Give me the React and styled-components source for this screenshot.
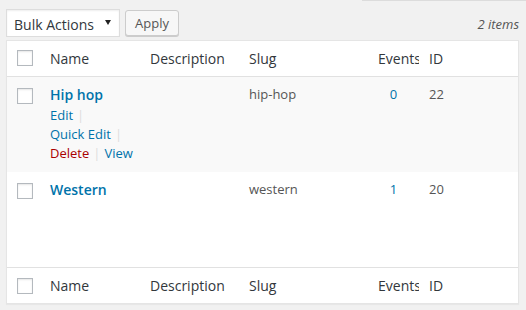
import React from "react";
import styled, { createGlobalStyle } from "styled-components";

const GlobalStyle = createGlobalStyle`
  html, body {
    margin: 0;
    padding: 0;
    background: #f1f1f1;
  }
  body {
    font-family: "Open Sans", "Liberation Sans", sans-serif;
    font-size: 13px;
    color: #444;
  }
`;

const Page = styled.div`
  width: 526px;
  height: 310px;
  overflow: hidden;
  padding: 0 7px 0 6px;
  box-sizing: border-box;
`;

const TopEdge = styled.div`
  display: flex;
  justify-content: flex-end;
  margin-right: -7px;
`;

const SearchEdge = styled.div`
  width: 164px;
  height: 1px;
  background: #dcdcdc;
`;

const TableNav = styled.div`
  display: flex;
  align-items: flex-start;
  gap: 5px;
  padding-top: 8px;
  height: 31px;
`;

const Select = styled.div`
  width: 114px;
  height: 28px;
  box-sizing: border-box;
  display: flex;
  align-items: center;
  justify-content: space-between;
  padding: 2px 8px 0 7px;
  background: #fff;
  border: 1px solid #ddd;
  box-shadow: inset 0 1px 2px rgba(0, 0, 0, 0.07);
  font-size: 14px;
  color: #32373c;
`;

const Caret = styled.svg`
  width: 6px;
  height: 5px;
  margin-top: -3px;
`;

const Button = styled.button`
  height: 26px;
  margin-top: 1px;
  padding: 0 9px 1px;
  font-family: "Open Sans", "Liberation Sans", sans-serif;
  font-size: 13px;
  line-height: 24px;
  color: #555;
  background: #f7f7f7;
  border: 1px solid #ccc;
  border-radius: 3px;
  box-shadow: 0 1px 0 #ccc;
`;

const Count = styled.div`
  margin-left: auto;
  padding-top: 6px;
  font-size: 13px;
  font-style: italic;
  color: #555;
`;

const Table = styled.table`
  width: 100%;
  table-layout: fixed;
  border-collapse: separate;
  border-spacing: 0;
  background: #fff;
  border: 1px solid #e5e5e5;
  box-shadow: 0 1px 1px rgba(0, 0, 0, 0.04);
`;

const HeadCell = styled.th`
  text-align: left;
  font-weight: 400;
  font-size: 14px;
  line-height: 19px;
  color: #32373c;
  padding: 8px 10px;
  overflow: hidden;
  white-space: nowrap;
  ${(p) => (p.$foot ? "border-top: 1px solid #e1e1e1;" : "border-bottom: 1px solid #e1e1e1;")}
`;

const CheckHead = styled.th`
  padding: ${(p) => (p.$foot ? "10px" : "9px")} 0 0 10px;
  vertical-align: top;
  ${(p) => (p.$foot ? "border-top: 1px solid #e1e1e1;" : "border-bottom: 1px solid #e1e1e1;")}
`;

const Row = styled.tr`
  background: ${(p) => (p.$alt ? "#f9f9f9" : "#fff")};
`;

const Cell = styled.td`
  vertical-align: top;
  padding: 8px 10px 9px;
  font-size: 13px;
  line-height: 19px;
  color: #555;
  overflow: hidden;
  ${(p) => (p.$center ? "text-align: center;" : "")}
`;

const CheckCell = styled.th`
  vertical-align: top;
  padding: 11px 0 0 10px;
`;

const Checkbox = styled.input.attrs({ type: "checkbox" })`
  appearance: none;
  display: block;
  margin: 0;
  width: 16px;
  height: 16px;
  background: #fff;
  border: 1px solid #b4b9be;
  box-shadow: inset 0 1px 2px rgba(0, 0, 0, 0.1);
  box-sizing: border-box;
`;

const RowTitle = styled.a`
  display: block;
  font-size: 14px;
  font-weight: 600;
  line-height: 20px;
  color: #0073aa;
  text-decoration: none;
`;

const Actions = styled.div`
  padding-top: 1px;
  visibility: ${(p) => (p.$hidden ? "hidden" : "visible")};
`;

const ActionLine = styled.div`
  line-height: 19px;
  white-space: nowrap;
`;

const ActionLink = styled.a`
  color: ${(p) => (p.$danger ? "#a00" : "#0073aa")};
  text-decoration: none;
`;

const Sep = styled.span`
  color: #ddd;
  margin: 0 4px;
`;

const CountLink = styled.a`
  color: #0073aa;
  text-decoration: none;
`;

const columns = [
  { key: "name", label: "Name", width: 100 },
  { key: "desc", label: "Description", width: 99 },
  { key: "slug", label: "Slug", width: 129 },
  { key: "events", label: "Events", width: 51 },
  { key: "id", label: "ID" },
];

const terms = [
  { name: "Hip hop", slug: "hip-hop", events: 0, id: 22 },
  { name: "Western", slug: "western", events: 1, id: 20 },
];

const HeaderRow = ({ foot }) => (
  <tr>
    <CheckHead $foot={foot}>
      <Checkbox />
    </CheckHead>
    {columns.map((c) => (
      <HeadCell key={c.key} $foot={foot}>
        {c.label}
      </HeadCell>
    ))}
  </tr>
);

const App = () => (
  <Page>
    <GlobalStyle />
    <TopEdge>
      <SearchEdge />
    </TopEdge>
    <TableNav>
      <Select>
        Bulk Actions
        <Caret viewBox="0 0 6 5">
          <polygon points="0,0 6,0 3,5" fill="#222" />
        </Caret>
      </Select>
      <Button>Apply</Button>
      <Count>2 items</Count>
    </TableNav>
    <Table>
      <colgroup>
        <col style={{ width: 33 }} />
        {columns.map((c) => (
          <col key={c.key} style={c.width ? { width: c.width } : undefined} />
        ))}
      </colgroup>
      <thead>
        <HeaderRow />
      </thead>
      <tbody>
        {terms.map((t, i) => (
          <Row key={t.id} $alt={i % 2 === 0}>
            <CheckCell>
              <Checkbox />
            </CheckCell>
            <Cell>
              <RowTitle>{t.name}</RowTitle>
              <Actions $hidden={i !== 0}>
                <ActionLine>
                  <ActionLink>Edit</ActionLink>
                  <Sep>|</Sep>
                </ActionLine>
                <ActionLine>
                  <ActionLink>Quick Edit</ActionLink>
                  <Sep>|</Sep>
                </ActionLine>
                <ActionLine>
                  <ActionLink $danger>Delete</ActionLink>
                  <Sep>|</Sep>
                  <ActionLink>View</ActionLink>
                </ActionLine>
              </Actions>
            </Cell>
            <Cell />
            <Cell>{t.slug}</Cell>
            <Cell $center>
              <CountLink>{t.events}</CountLink>
            </Cell>
            <Cell>{t.id}</Cell>
          </Row>
        ))}
      </tbody>
      <tfoot>
        <HeaderRow foot />
      </tfoot>
    </Table>
  </Page>
);

export default App;
